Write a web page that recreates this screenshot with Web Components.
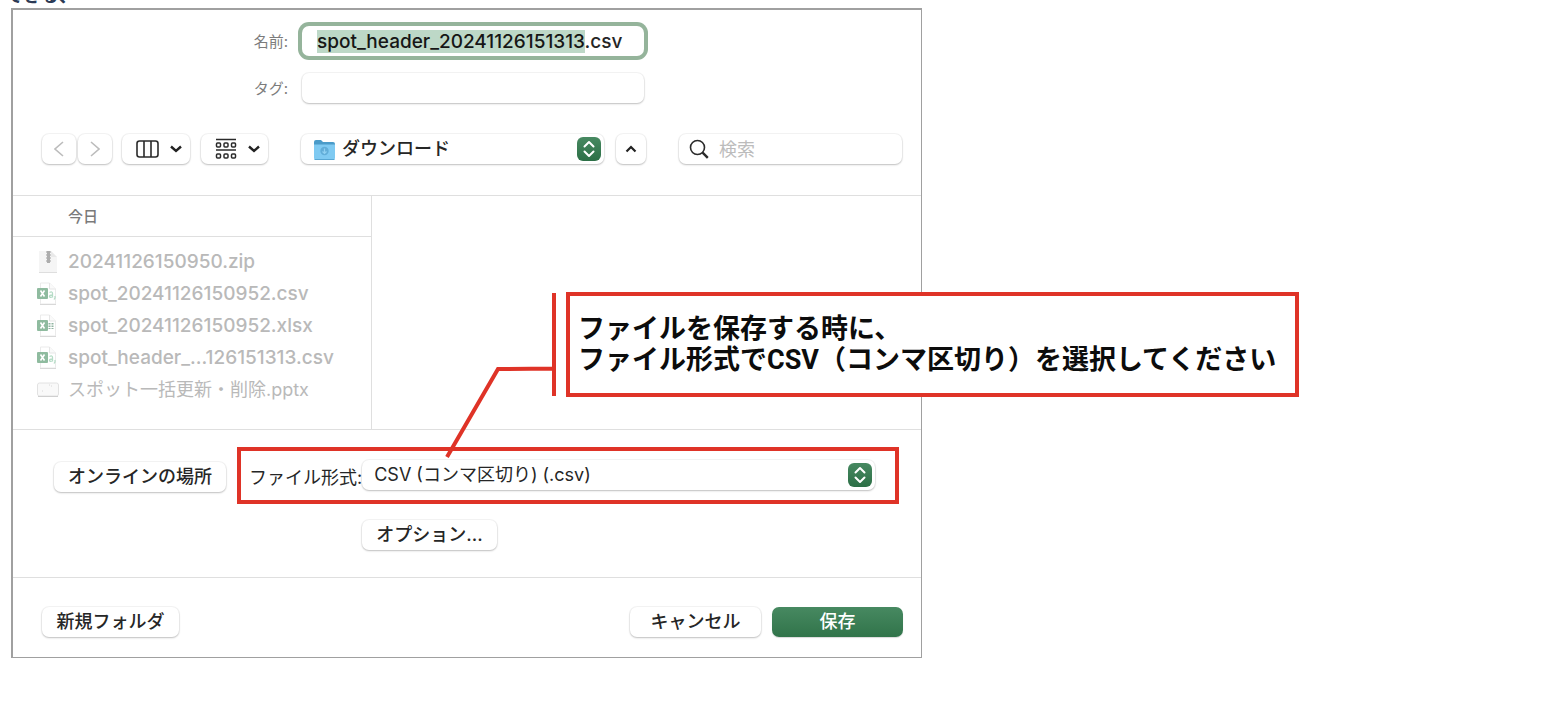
<!DOCTYPE html>
<html lang="ja">
<head>
<meta charset="utf-8">
<title>ファイルの保存</title>
<style>
  body {
    margin: 0;
    background: #fff;
    color: #262626;
    font-family: Inter, "Noto Sans CJK JP", sans-serif;
    font-size: 18px;
    line-height: 24px;
  }
</style>
</head>
<body>
<manual-page>
  <span slot="lead">できる、</span>
  <save-dialog></save-dialog>
  <call-out slot="note">ファイルを保存する時に、<br>ファイル形式でCSV（コンマ区切り）を選択してください</call-out>
</manual-page>

<script>
const define = (name, html, setup) => {
  const template = document.createElement('template');
  template.innerHTML = html;
  customElements.define(name, class extends HTMLElement {
    constructor() {
      super();
      this.attachShadow({ mode: 'open' }).append(template.content.cloneNode(true));
    }
    connectedCallback() { if (setup) setup(this, this.shadowRoot); }
  });
};

const surface = `
  background: #fff;
  border: 0;
  border-radius: 7px;
  box-shadow: 0 0 0 1px rgba(0,0,0,.04), 0 1px 2px rgba(0,0,0,.22);
`;

/* Page: a clipped line of running text, then the figure */
define('manual-page', `
  <style>
    :host { display: block; overflow: hidden; }
    header { display: flex; align-items: flex-end; height: 8px; padding-left: 5px; overflow: hidden; color: #2b3a55; font-weight: 700; }
    figure { position: relative; margin: 0 12px 56px 11px; }
  </style>
  <header><slot name="lead"></slot></header>
  <figure><slot></slot><slot name="note"></slot></figure>
`);

/* Push button */
define('push-button', `
  <style>
    :host { display: block; }
    button { ${surface} display: flex; align-items: center; justify-content: center; gap: 11px; width: 100%; height: 30px; padding: 0; font: inherit; font-weight: 500; color: #262626; white-space: nowrap; }
    :host([menu]) button { padding-left: 5px; }
    :host([primary]) button { color: #fff; background: linear-gradient(#478961, #31744a); box-shadow: 0 1px 1px rgba(0,0,0,.15); }
  </style>
  <button type="button"><slot></slot></button>
`, (host, root) => {
  const label = host.getAttribute('label');
  if (label) root.querySelector('button').setAttribute('aria-label', label);
});

/* Pop-up menu with the green double-arrow knob */
define('popup-menu', `
  <style>
    :host { display: flex; align-items: flex-end; }
    label { flex: none; color: #262626; }
    label:empty { display: none; }
    .box { flex: 1; position: relative; min-width: 0; }
    select { ${surface} appearance: none; display: block; width: 100%; height: 30px; margin: 0; padding: 0 32px 0 12px; font: inherit; color: #262626; }
    :host([folder]) select { padding-left: 41px; font-weight: 500; }
    .knob { position: absolute; right: 3px; top: 3px; width: 24px; height: 24px; pointer-events: none; }
    .icon { position: absolute; left: 12px; top: 5px; pointer-events: none; }
  </style>
  <label for="menu"></label>
  <div class="box">
    <select id="menu"><option></option></select>
    <span class="icon"><slot name="icon"></slot></span>
    <svg class="knob" viewBox="0 0 24 24" aria-hidden="true">
      <defs><linearGradient id="g" x2="0" y2="1"><stop stop-color="#478961"/><stop offset="1" stop-color="#2c6f46"/></linearGradient></defs>
      <rect width="24" height="24" rx="6" fill="url(#g)"/>
      <path d="M7.500 9.500 12 5l4.500 4.500M7.500 14.500 12 19l4.500-4.500" fill="none" stroke="#fff" stroke-width="2" stroke-linecap="round" stroke-linejoin="round"/>
    </svg>
  </div>
`, (host, root) => {
  root.querySelector('option').textContent = host.getAttribute('value');
  root.querySelector('label').textContent = host.getAttribute('label') || '';
  if (host.hasAttribute('name')) root.querySelector('select').setAttribute('aria-label', host.getAttribute('name'));
});

/* Labelled text box */
define('text-field', `
  <style>
    :host { display: grid; grid-template-columns: 275px minmax(0, 342px); column-gap: 14px; align-items: end; }
    label { text-align: right; font-size: 15px; line-height: 28px; color: #7c7c7c; }
    input { ${surface} box-sizing: border-box; width: 100%; height: 30px; padding: 0 15px; font: inherit; font-size: 19px; font-weight: 500; color: #262626; outline: 0; }
    :host([active]) input { box-shadow: 0 0 0 4px #95b49b; }
    input::selection { background: #bdd8c7; color: #161616; }
  </style>
  <label for="field"></label><input id="field" type="text">
`, (host, root) => {
  root.querySelector('label').textContent = host.getAttribute('label');
  const input = root.querySelector('input');
  input.value = host.getAttribute('value') || '';
  if (host.hasAttribute('active')) {
    input.focus();
    input.setSelectionRange(0, input.value.lastIndexOf('.'));
  }
});

define('search-field', `
  <style>
    :host { display: block; position: relative; }
    input { ${surface} appearance: none; box-sizing: border-box; display: block; width: 100%; height: 30px; padding: 0 8px 0 40px; font: inherit; color: #262626; }
    input::placeholder { color: #bcbcbc; opacity: 1; }
    svg { position: absolute; left: 10px; top: 5px; }
  </style>
  <input type="search" placeholder="検索" aria-label="検索">
  <svg width="21" height="21" viewBox="0 0 21 21" fill="none" stroke="#2b2b2b" aria-hidden="true"><circle cx="8.500" cy="8.500" r="7" stroke-width="1.600"/><path d="m13.600 13.600 5.200 5.200" stroke-width="2.400"/></svg>
`);

/* One file in the list, its icon chosen by kind */
const sheet = (detail) => `
  <path d="M3.500 1h9l6 6v15h-15z" fill="#fff" stroke="#ebebeb"/><path d="M12.500 1v6h6" fill="#fafafa" stroke="#e6e6e6"/><path d="M3 22.500h16" stroke="#d8d8d8"/>
  ${detail}
  <rect x="0" y="6" width="11" height="11" rx="1" fill="#8fbb9f"/><path d="m3.500 8.500 4 6m0-6-4 6" stroke="#fff" stroke-width="1.600"/>`;
const fileIcons = {
  zip: `<path d="M2 1h12l6 6v15H2z" fill="#f5f5f5"/><path d="M14 1v6h6" fill="#e9e9e9"/><path d="M2 22.500h18" stroke="#dedede"/><path d="M11.500 1v11" stroke="#a0a0a0" stroke-width="4" stroke-dasharray="2 1"/><path d="M11.500 1v12" stroke="#adadad" stroke-width="3"/>`,
  csv: sheet(`<path d="M12.500 10.500q3-1.500 3 1v4m0-2.500q-3 0-3 1.500t3 .5M18 14v2l-1 1.500" fill="none" stroke="#b5dcc6" stroke-width="1.300"/>`),
  xlsx: sheet(`<path d="M12.500 9v6m3-6v6" stroke="#8fb3a0" stroke-width="2" stroke-dasharray="1.500 1"/>`),
  pptx: `<rect x="0.500" y="5" width="21" height="13" rx="2" fill="#f9f9f9" stroke="#e2e2e2"/><path d="M1 18.500h20" stroke="#cfcfcf"/><path d="M5 13h1m8-5h1m-3-1h1" stroke="#d8d8d8"/>`
};
define('file-item', `
  <style>
    :host { display: flex; align-items: center; gap: 9px; height: 32px; padding-left: 24px; color: #b9b9b9; font-size: 19px; font-weight: 500; white-space: nowrap; }
    :host([kind="pptx"]) { font-size: 18px; font-weight: 400; }
    svg { flex: none; }
  </style>
  <svg width="22" height="24" viewBox="0 0 22 24" fill="none" aria-hidden="true"></svg><span><slot></slot></span>
`, (host, root) => {
  root.querySelector('svg').innerHTML = fileIcons[host.getAttribute('kind')];
});

/* Red annotation: leader line, bar and boxed note, lying over the dialog */
define('call-out', `
  <style>
    :host { position: absolute; left: 434px; top: 284px; display: flex; font-family: Roboto, "Noto Sans CJK JP", sans-serif; font-size: 27px; line-height: 31px; font-weight: 700; color: #0c0c0c; white-space: nowrap; }
    svg { flex: none; display: block; margin-right: 10px; }
    p { box-sizing: border-box; width: 733px; height: 105px; margin: 0; padding: 18px 8px; border: 4px solid #df3327; background: #fff; }
  </style>
  <svg width="111" height="168" viewBox="0 0 111 168" fill="none" stroke="#df3327" stroke-width="4" aria-hidden="true"><path d="M109 1v103M109 76.500 53 77 2 165"/></svg>
  <p><slot></slot></p>
`);

define('save-dialog', `
  <style>
    :host { display: block; box-sizing: border-box; max-width: 911px; border: 1px solid #a0a0a0; border-width: 2px 1px 1px 2px; background: #fff; }
    .fields { display: grid; row-gap: 17px; padding-top: 16px; }
    .toolbar { display: flex; padding: 31px 19px 31px 29px; }
    .toolbar > * { flex: none; }
    .nav { display: grid; grid-template-columns: 34px 34px; gap: 2px; }
    .views { display: grid; grid-template-columns: 68px 67px; gap: 11px; margin: 0 33px 0 10px; }
    .toolbar popup-menu { flex: 1; }
    .up { width: 30px; margin: 0 33px 0 12px; }
    search-field { width: 223px; }
    .browser { display: grid; grid-template-columns: 359px 1fr; border: 1px solid #dfdfdf; border-width: 1px 0; }
    .list { border-right: 1px solid #dfdfdf; padding-bottom: 23px; }
    h2 { margin: 0 0 9px; padding: 9px 0 7px 55px; border-bottom: 1px solid #dfdfdf; font-size: 15px; line-height: 24px; font-weight: 500; color: #7a7a7a; }
    .format { display: flex; align-items: center; gap: 11px; padding: 17px 22px 16px 41px; }
    .format push-button { width: 172px; padding-top: 2px; }
    .marked { flex: 1; padding: 9px 20px 10px 8px; border: 4px solid #df3327; }
    .options { width: 135px; margin: 0 0 27px 349px; }
    footer { display: flex; gap: 11px; padding: 29px 18px 20px 29px; border-top: 1px solid #dfdfdf; }
    footer push-button { width: 131px; }
    footer .new { width: 137px; margin-right: auto; }
  </style>
  <div class="fields">
    <text-field label="名前:" value="spot_header_20241126151313.csv" active></text-field>
    <text-field label="タグ:"></text-field>
  </div>
  <div class="toolbar">
    <div class="nav">
      <push-button label="戻る"><svg width="10" height="16" viewBox="0 0 10 16" fill="none" stroke="#bcbcbc" stroke-width="1.600"><path d="M9 1 1 8l8 7"/></svg></push-button>
      <push-button label="進む"><svg width="10" height="16" viewBox="0 0 10 16" fill="none" stroke="#bcbcbc" stroke-width="1.600"><path d="m1 1 8 7-8 7"/></svg></push-button>
    </div>
    <div class="views">
      <push-button menu label="カラム表示"><svg width="23" height="18" viewBox="0 0 23 18" fill="none" stroke="#2b2b2b" stroke-width="1.600"><rect x="1" y="1" width="21" height="16" rx="2.500"/><path d="M8 1v16M15 1v16"/></svg><svg width="12" height="8" viewBox="0 0 12 8" fill="none" stroke="#222" stroke-width="2.400"><path d="m1 1.500 5 4.500 5-4.500"/></svg></push-button>
      <push-button menu label="グループ"><svg width="22" height="22" viewBox="0 0 22 22" fill="none" stroke="#2b2b2b" stroke-width="1.500"><path d="M1 1.500h20M1 12h20"/><rect x="1.500" y="5" width="4" height="4" rx="1"/><rect x="9" y="5" width="4" height="4" rx="1"/><rect x="16.500" y="5" width="4" height="4" rx="1"/><rect x="1.500" y="16" width="4" height="4" rx="1"/><rect x="9" y="16" width="4" height="4" rx="1"/><rect x="16.500" y="16" width="4" height="4" rx="1"/></svg><svg width="12" height="8" viewBox="0 0 12 8" fill="none" stroke="#222" stroke-width="2.400"><path d="m1 1.500 5 4.500 5-4.500"/></svg></push-button>
    </div>
    <popup-menu folder name="保存場所" value="ダウンロード">
      <svg slot="icon" width="23" height="22" viewBox="0 0 23 22" style="display:block" aria-hidden="true"><path d="M1 3q0-2 2-2h5l2 2h10q2 0 2 2v4H1z" fill="#4a9bc9"/><path d="M1 5.500h21V19q0 1.500-1.500 1.500h-18Q1 20.500 1 19z" fill="#7fcaf2"/><path d="M1.500 20.500h20" stroke="#58a7d4"/><circle cx="11.500" cy="12" r="4.200" fill="#61add8"/><path d="M11.500 9.500v4.500M9.500 12.500l2 2 2-2" fill="none" stroke="#8fd0f2" stroke-width="1.200"/></svg>
    </popup-menu>
    <push-button class="up" label="閉じる"><svg width="12" height="8" viewBox="0 0 12 8" fill="none" stroke="#222" stroke-width="2.200"><path d="m1.500 6.500 4.500-4.500 4.500 4.500"/></svg></push-button>
    <search-field></search-field>
  </div>
  <div class="browser">
    <div class="list">
      <h2>今日</h2>
      <file-item kind="zip">20241126150950.zip</file-item>
      <file-item kind="csv">spot_20241126150952.csv</file-item>
      <file-item kind="xlsx">spot_20241126150952.xlsx</file-item>
      <file-item kind="csv">spot_header_...126151313.csv</file-item>
      <file-item kind="pptx">スポット一括更新・削除.pptx</file-item>
    </div>
  </div>
  <div class="format">
    <push-button>オンラインの場所</push-button>
    <div class="marked"><popup-menu label="ファイル形式:" value="CSV (コンマ区切り) (.csv)"></popup-menu></div>
  </div>
  <push-button class="options">オプション...</push-button>
  <footer>
    <push-button class="new">新規フォルダ</push-button>
    <push-button>キャンセル</push-button>
    <push-button primary>保存</push-button>
  </footer>
`);
</script>
</body>
</html>
